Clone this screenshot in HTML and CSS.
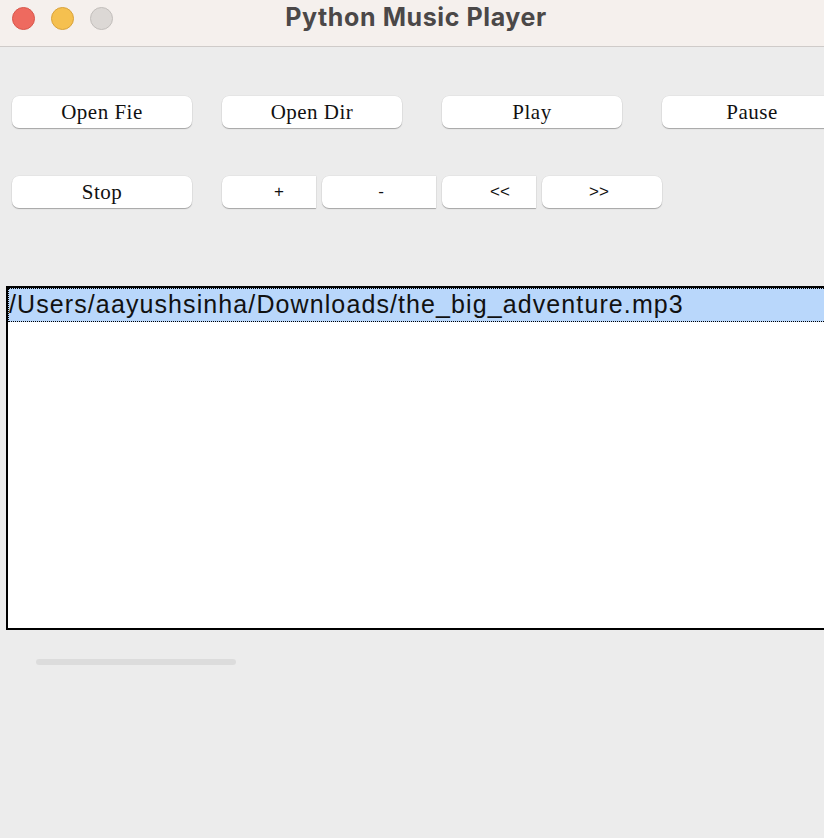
FILE: index.html
```html
<!DOCTYPE html>
<html>
<head>
<meta charset="utf-8">
<link rel="stylesheet" href="styles.css">
</head>
<body>
<div class="window">
  <div class="titlebar">
    <div class="lights">
      <span class="light red"></span>
      <span class="light yellow"></span>
      <span class="light gray"></span>
    </div>
    <div class="title">Python Music Player</div>
  </div>
  <div class="content">
    <div class="row row1">
      <button class="btn w180">Open Fie</button>
      <button class="btn w180 g30">Open Dir</button>
      <button class="btn w180 g40">Play</button>
      <button class="btn w180 g40">Pause</button>
    </div>
    <div class="row row2">
      <button class="btn w180">Stop</button>
      <button class="btn cut w94 g30 sym plus">+</button>
      <button class="btn cut w114 g6 sym minus">-</button>
      <button class="btn cut w94 g6 sym prev">&lt;&lt;</button>
      <button class="btn w120 g6 sym next">&gt;&gt;</button>
    </div>
    <div class="listbox">
      <div class="item selected">/Users/aayushsinha/Downloads/the_big_adventure.mp3</div>
    </div>
    <div class="scroll"></div>
  </div>
</div>
</body>
</html>
```
FILE: styles.css
```css
html, body {
  margin: 0;
  padding: 0;
  width: 824px;
  height: 838px;
  overflow: hidden;
  background: #ececec;
}
.window {
  width: 824px;
  height: 838px;
  display: flex;
  flex-direction: column;
}
.titlebar {
  height: 46px;
  background: #f5f0ed;
  border-bottom: 1px solid #cfcbc9;
  position: relative;
  display: flex;
  align-items: center;
  flex-shrink: 0;
}
.lights {
  display: flex;
  gap: 16px;
  padding-left: 12px;
  margin-top: -10px;
}
.light {
  width: 23px;
  height: 23px;
  border-radius: 50%;
  box-sizing: border-box;
}
.red { background: #ee6a5f; border: 1px solid #d8564b; }
.yellow { background: #f5c04f; border: 1px solid #d9a23a; }
.gray { background: #dcd8d5; border: 1px solid #c2bebb; }
.title {
  position: absolute;
  left: 0;
  right: 0;
  top: 2px;
  text-align: center;
  font-family: "Inter", "Liberation Sans", sans-serif;
  font-weight: 700;
  font-size: 25px;
  letter-spacing: 0.6px;
  color: #4b4848;
  padding-left: 8px;
}
.content {
  flex: 1;
  display: flex;
  flex-direction: column;
}
.row {
  display: flex;
  padding-left: 12px;
  flex-shrink: 0;
}
.row1 { margin-top: 49px; }
.row2 { margin-top: 48px; }
.btn {
  height: 32px;
  background: #fff;
  border: none;
  border-radius: 7px;
  box-shadow: 0 1px 1px rgba(0,0,0,0.28), 0 0 0 0.5px rgba(0,0,0,0.06);
  font-family: "Liberation Serif", "Times New Roman", serif;
  font-size: 21px;
  letter-spacing: 0.5px;
  color: #111;
  padding: 0;
  flex-shrink: 0;
  margin: 0;
}
.sym {
  font-family: "Liberation Sans", Arial, sans-serif;
  font-size: 17px;
  letter-spacing: 0;
}
.plus { padding-left: 20px; }
.minus { padding-left: 4px; }
.prev { padding-left: 22px; }
.next { padding-right: 6px; }
.cut { border-radius: 7px 0 0 7px; }
.w180 { width: 180px; }
.w94 { width: 94px; }
.w114 { width: 114px; }
.w120 { width: 120px; }
.g30 { margin-left: 30px; }
.g40 { margin-left: 40px; }
.g6 { margin-left: 6px; }
.listbox {
  margin-top: 78px;
  margin-left: 6px;
  width: 830px;
  height: 344px;
  box-sizing: border-box;
  border: 2px solid #000;
  background: #fff;
  flex-shrink: 0;
}
.item {
  height: 34px;
  line-height: 30px;
  font-family: "Liberation Sans", Arial, sans-serif;
  font-size: 25px;
  letter-spacing: 1.1px;
  color: #111;
  white-space: nowrap;
  box-sizing: border-box;
}
.selected {
  background: #b9d7fb;
  border: 1px dotted #000;
}
.scroll {
  margin-top: 29px;
  margin-left: 36px;
  width: 200px;
  height: 6px;
  border-radius: 3px;
  background: #dcdcdc;
  flex-shrink: 0;
}
```
